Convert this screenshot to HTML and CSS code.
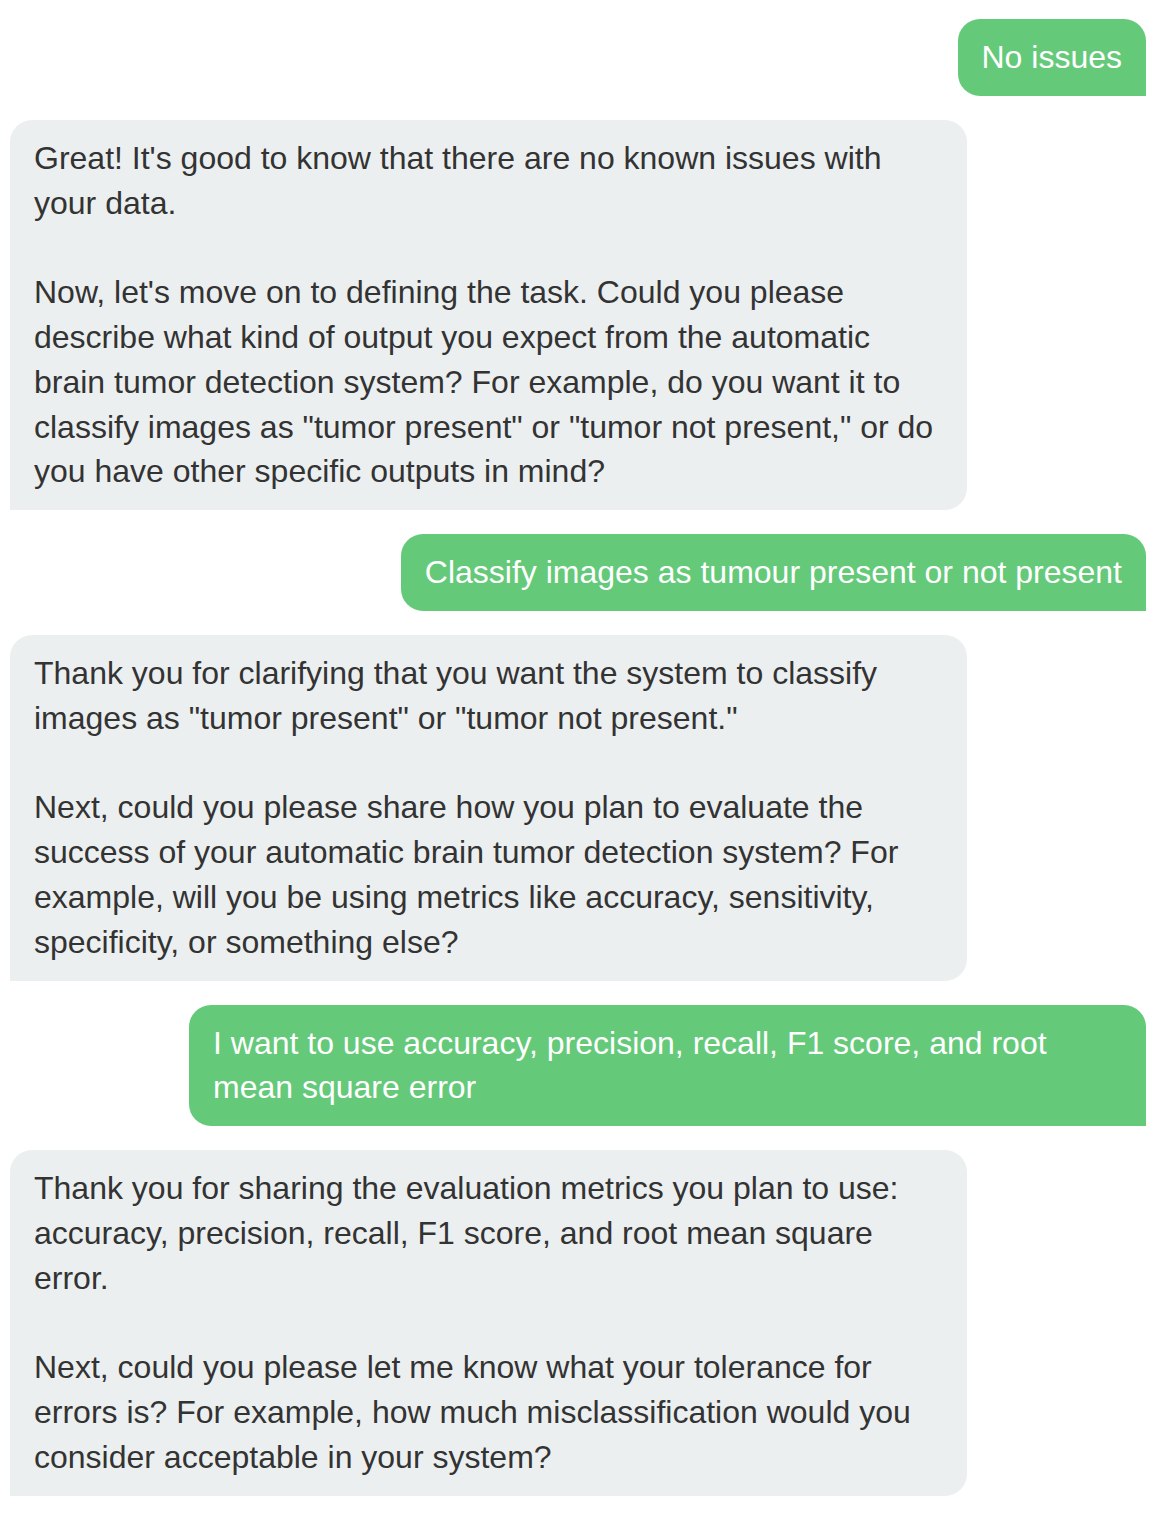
FILE: index.html
```html
<!DOCTYPE html>
<html lang="en">
<head>
<meta charset="utf-8">
<title>Chat</title>
<link rel="stylesheet" href="styles.css">
</head>
<body>
<div class="chat">
  <div class="msg user">No issues</div>
  <div class="msg bot">Great! It's good to know that there are no known issues with your data.<br><br>Now, let's move on to defining the task. Could you please describe what kind of output you expect from the automatic brain tumor detection system? For example, do you want it to classify images as "tumor present" or "tumor not present," or do you have other specific outputs in mind?</div>
  <div class="msg user">Classify images as tumour present or not present</div>
  <div class="msg bot">Thank you for clarifying that you want the system to classify images as "tumor present" or "tumor not present."<br><br>Next, could you please share how you plan to evaluate the success of your automatic brain tumor detection system? For example, will you be using metrics like accuracy, sensitivity, specificity, or something else?</div>
  <div class="msg user">I want to use accuracy, precision, recall, F1 score, and root mean square error</div>
  <div class="msg bot">Thank you for sharing the evaluation metrics you plan to use: accuracy, precision, recall, F1 score, and root mean square error.<br><br>Next, could you please let me know what your tolerance for errors is? For example, how much misclassification would you consider acceptable in your system?</div>
</div>
</body>
</html>
```
FILE: styles.css
```css
html, body {
  margin: 0;
  padding: 0;
  background: #ffffff;
}
body {
  font-family: "Liberation Sans", Arial, Helvetica, sans-serif;
}
.chat {
  display: flex;
  flex-direction: column;
  gap: 24px;
  padding: 19px 16px 20px 10px;
}
.msg {
  box-sizing: border-box;
  max-width: 957px;
  padding: 16px 24px;
  font-size: 32px;
  line-height: 44.8px;
}
.user {
  align-self: flex-end;
  background: #65c97a;
  color: #ffffff;
  border-radius: 22px 22px 0 22px;
}
.bot {
  align-self: flex-start;
  background: #eceff0;
  color: #333333;
  border-radius: 22px 22px 22px 0;
}
```
